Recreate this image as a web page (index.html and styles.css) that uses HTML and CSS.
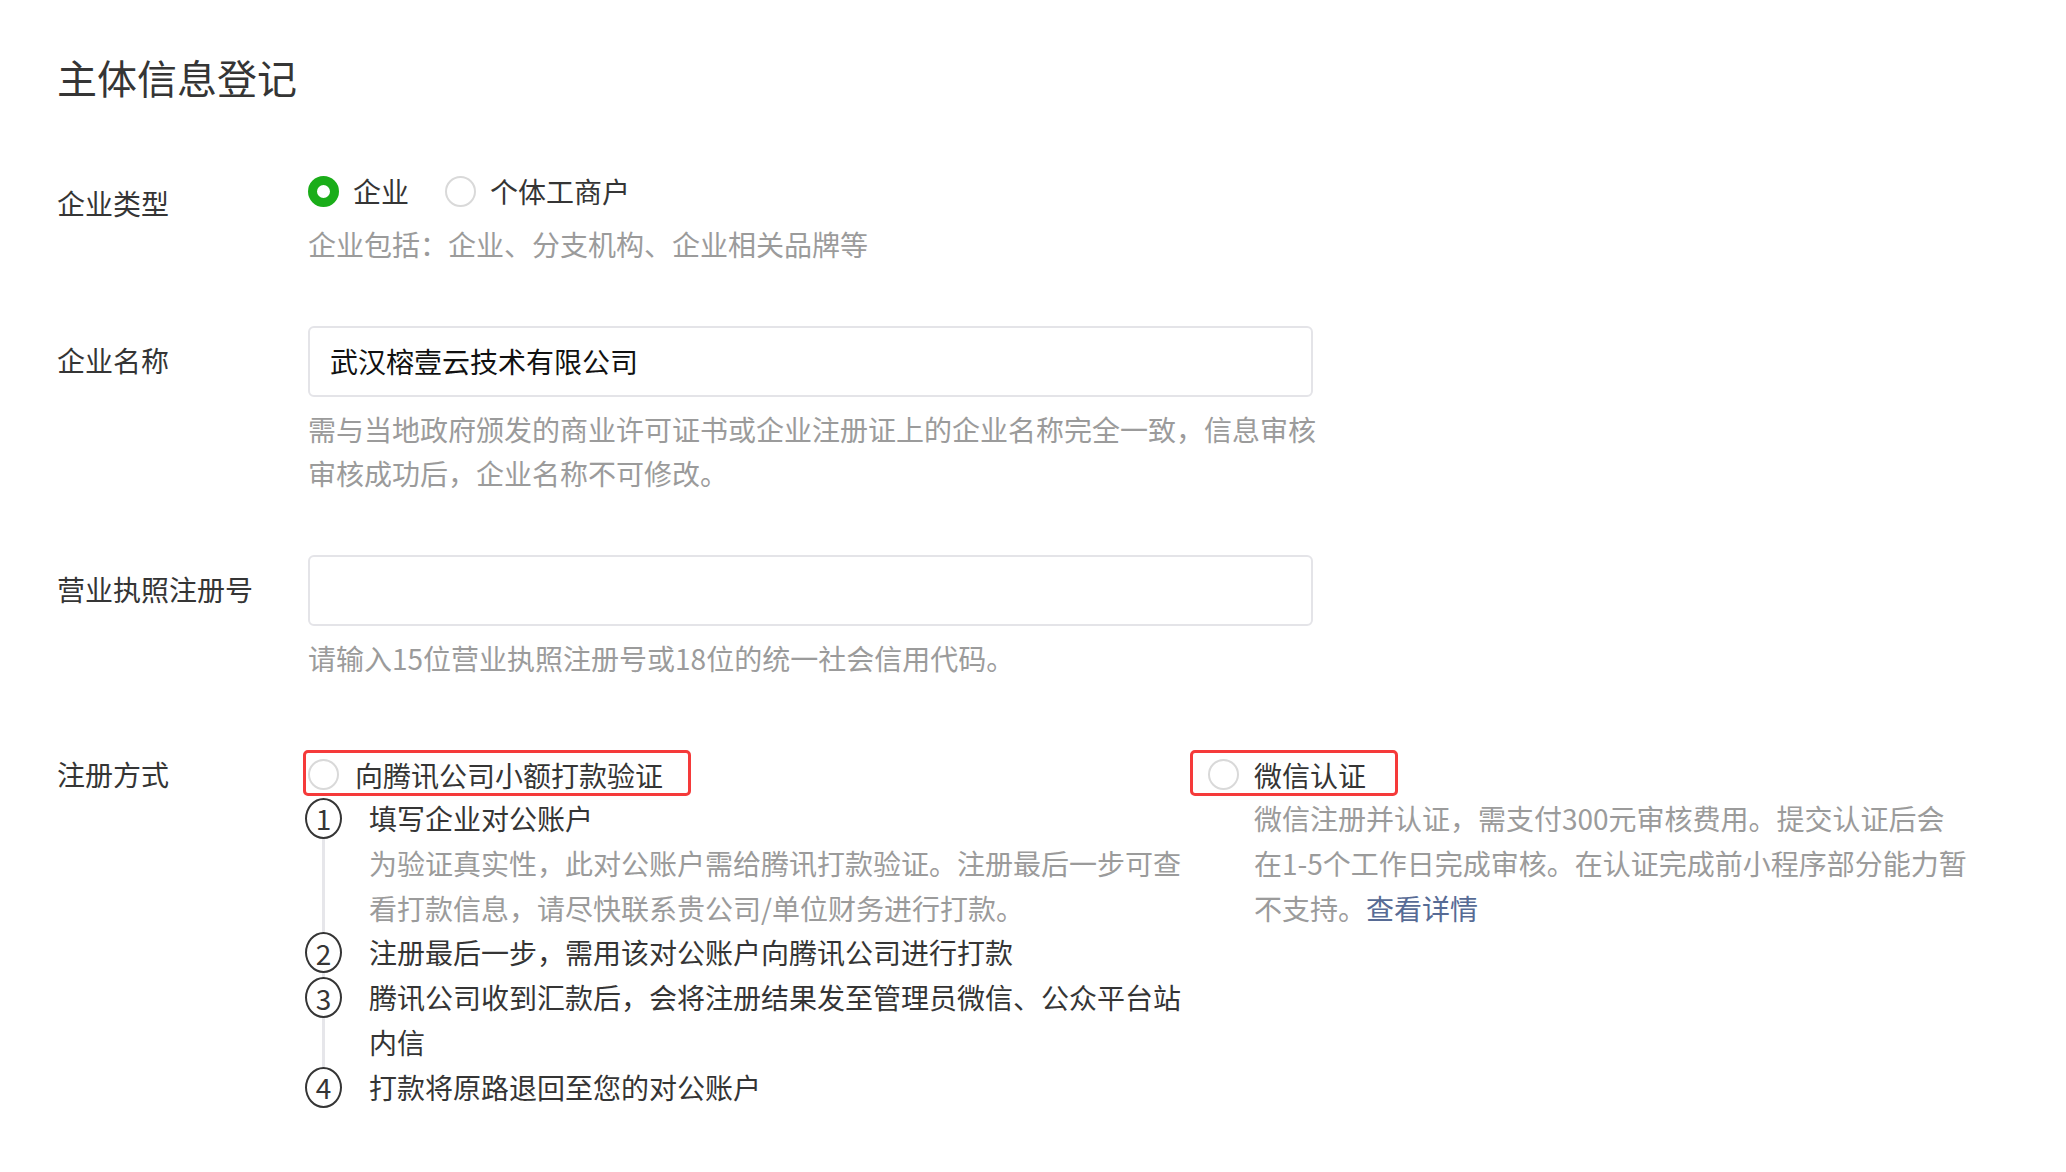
FILE: index.html
```html
<!DOCTYPE html>
<html>

	<head>
		<meta charset="UTF-8">
		<title>主体信息登记</title>
		<link rel="stylesheet" href="styles.css">
	</head>

	<body>
		<div class="page">
			<h1 class="title">主体信息登记</h1>

			<!-- 企业类型 -->
			<div class="row">
				<div class="label">企业类型</div>
				<div class="field">
					<div class="radios">
						<label class="radio"><span class="dot on"></span>企业</label>
						<label class="radio"><span class="dot"></span>个体工商户</label>
					</div>
					<p class="tip tip-first">企业包括：企业、分支机构、企业相关品牌等</p>
				</div>
			</div>

			<!-- 企业名称 -->
			<div class="row">
				<div class="label">企业名称</div>
				<div class="field">
					<input class="input" type="text" value="武汉榕壹云技术有限公司" />
					<p class="tip">需与当地政府颁发的商业许可证书或企业注册证上的企业名称完全一致，信息审核审核成功后，企业名称不可修改。</p>
				</div>
			</div>

			<!-- 营业执照注册号 -->
			<div class="row">
				<div class="label">营业执照注册号</div>
				<div class="field">
					<input class="input" type="text" value="" />
					<p class="tip">请输入15位营业执照注册号或18位的统一社会信用代码。</p>
				</div>
			</div>

			<!-- 注册方式 -->
			<div class="row">
				<div class="label">注册方式</div>
				<div class="field">
					<div class="options">
						<div class="opt opt-left">
							<div class="opt-head">
								<span class="dot"></span>向腾讯公司小额打款验证
								<span class="mark mark-a"></span>
							</div>
							<ul class="steps">
								<li class="step">
									<span class="num">1</span>
									<div class="step-body">
										填写企业对公账户
										<p class="step-desc">为验证真实性，此对公账户需给腾讯打款验证。注册最后一步可查看打款信息，请尽快联系贵公司/单位财务进行打款。</p>
									</div>
								</li>
								<li class="step">
									<span class="num">2</span>
									<div class="step-body">注册最后一步，需用该对公账户向腾讯公司进行打款</div>
								</li>
								<li class="step">
									<span class="num">3</span>
									<div class="step-body">腾讯公司收到汇款后，会将注册结果发至管理员微信、公众平台站内信</div>
								</li>
								<li class="step">
									<span class="num">4</span>
									<div class="step-body">打款将原路退回至您的对公账户</div>
								</li>
							</ul>
						</div>
						<div class="opt opt-right">
							<div class="opt-head">
								<span class="dot"></span>微信认证
								<span class="mark mark-b"></span>
							</div>
							<p class="opt-desc">微信注册并认证，需支付300元审核费用。提交认证后会在1-5个工作日完成审核。在认证完成前小程序部分能力暂不支持。<a class="link" href="#">查看详情</a></p>
						</div>
					</div>
				</div>
			</div>
		</div>
	</body>

</html>
```

FILE: styles.css
```css
* {
	padding: 0;
	margin: 0;
	box-sizing: border-box;
}

body {
	background: #fff;
	color: #353535;
	font-family: "Noto Sans CJK SC", "Noto Sans", sans-serif;
	font-size: 28px;
	line-height: 44.8px;
}

.page {
	padding: 49px 0 0 57px;
}

.title {
	font-size: 40px;
	font-weight: normal;
	line-height: 56px;
	margin-bottom: 64px;
	color: #353535;
}

.row {
	display: flex;
	align-items: flex-start;
	margin-bottom: 59px;
}

.label {
	width: 251px;
	flex-shrink: 0;
	padding-top: 12px;
}

.field {
	display: flex;
	flex-direction: column;
	align-items: flex-start;
}

/* 单选 */
.radios {
	display: flex;
	gap: 36px;
}

.radio {
	display: flex;
	align-items: center;
	gap: 14px;
}

.dot {
	display: inline-block;
	width: 31px;
	height: 31px;
	border: 2px solid #d9d9d9;
	border-radius: 50%;
	flex-shrink: 0;
	background: #fff;
}

.dot.on {
	border: 9px solid #1aad19;
}

.tip {
	color: #9b9b9b;
	margin-top: 10px;
	width: 1020px;
}

.tip-first {
	margin-top: 8px;
}

.input {
	width: 1005px;
	height: 71px;
	border: 2px solid #e4e4e8;
	border-radius: 6px;
	padding: 0 20px;
	font-family: inherit;
	font-size: 28px;
	color: #111;
	outline: none;
}

/* 注册方式 */
.options {
	display: flex;
	gap: 14px;
	margin-top: 14px;
}

.opt-left {
	width: 886px;
}

.opt-head {
	position: relative;
	display: flex;
	width: fit-content;
	height: 42px;
	align-items: center;
	gap: 16px;
}

.opt-right .opt-head {
	gap: 15px;
}

/* 红色标注框 */
.mark {
	position: absolute;
	top: -4px;
	bottom: 0;
	border: 3px solid #f53a3a;
	border-radius: 5px;
}

.mark-a {
	left: -5px;
	right: -28px;
}

.mark-b {
	left: -18px;
	right: -32px;
}

.steps {
	list-style: none;
	position: relative;
}

.steps::before {
	content: "";
	position: absolute;
	left: 14px;
	top: 24px;
	bottom: 24px;
	width: 3px;
	background: #e6e6ea;
}

.step {
	display: flex;
	align-items: flex-start;
}

.num {
	position: relative;
	width: 37px;
	height: 41px;
	margin: 2px 27px 0 -3px;
	border: 2px solid #353535;
	border-radius: 50%;
	background: #fff;
	flex-shrink: 0;
	display: flex;
	align-items: center;
	justify-content: center;
	font-size: 28px;
	line-height: 1;
}

.step-body {
	width: 825px;
}

.step-desc {
	color: #9b9b9b;
}

.opt-desc {
	color: #9b9b9b;
	width: 715px;
	margin-left: 46px;
}

.link {
	color: #576b95;
	text-decoration: none;
}
```
